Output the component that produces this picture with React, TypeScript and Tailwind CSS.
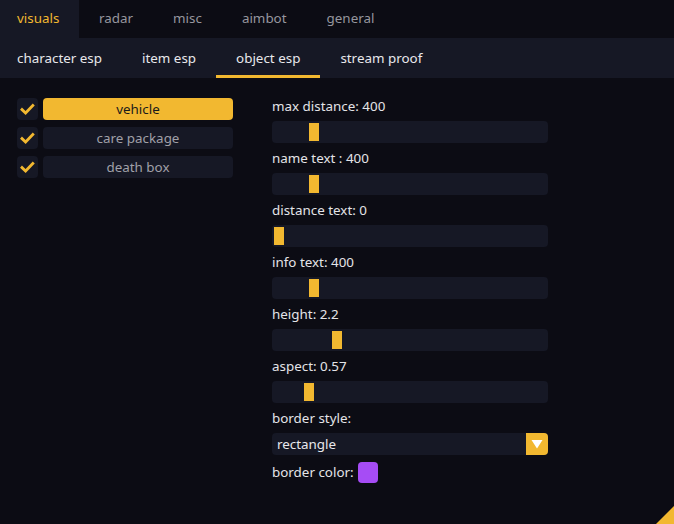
import { useState } from "react";

const mainTabs = ["visuals", "radar", "misc", "aimbot", "general"];
const subTabs = ["character esp", "item esp", "object esp", "stream proof"];

const objects = [
  { name: "vehicle", on: true, selected: true },
  { name: "care package", on: true, selected: false },
  { name: "death box", on: true, selected: false },
];

// offset = left edge of the grab inside the track, in px
const sliders = [
  { label: "max distance: 400", offset: 37 },
  { label: "name text : 400", offset: 37 },
  { label: "distance text: 0", offset: 2 },
  { label: "info text: 400", offset: 37 },
  { label: "height: 2.2", offset: 60 },
  { label: "aspect: 0.57", offset: 32 },
];

function Check() {
  return (
    <svg width="15" height="15" viewBox="0 0 15 15">
      <path d="M2 7.6 L5.6 11 L12.8 3.6" fill="none" stroke="#f2b830" strokeWidth="2.8" strokeLinecap="square" />
    </svg>
  );
}

function Slider({ label, offset }: { label: string; offset: number }) {
  return (
    <div className="flex flex-col">
      <div className="h-[23px] leading-[16px] text-[#e4e4e8]">{label}</div>
      <div className="relative h-[22px] w-[276px] rounded-[4px] bg-[#161825]">
        <div className="absolute top-[2px] h-[18px] w-[10px] bg-[#f2b830]" style={{ left: offset }} />
      </div>
      <div className="h-[7px]" />
    </div>
  );
}

export default function App() {
  const [tab] = useState("visuals");
  const [sub] = useState("object esp");

  return (
    <div
      className="relative w-[674px] h-[524px] overflow-hidden bg-[#0c0c14] text-[13.4px]"
      style={{ fontFamily: '"Noto Sans", "Open Sans", sans-serif' }}
    >
      {/* top tabs */}
      <div className="flex h-[38px] bg-[#0c0c14]">
        {mainTabs.map((t) => (
          <div
            key={t}
            className={`flex items-center h-full pb-[2px] ${
              t === tab ? "bg-[#161825] text-[#f2b830] pl-[17px] w-[79px]" : "text-[#96969e] px-[20px]"
            }`}
          >
            {t}
          </div>
        ))}
      </div>

      {/* sub tabs */}
      <div className="flex h-[40px] bg-[#161825]">
        {subTabs.map((s) => (
          <div key={s} className="relative flex items-center h-full px-[20px] first:pl-[17px] text-[#e8e8ec]">
            {s}
            {s === sub && <div className="absolute left-0 right-0 bottom-0 h-[3px] bg-[#f2b830]" />}
          </div>
        ))}
      </div>

      <div className="flex pt-[20px]">
        {/* object list */}
        <div className="flex flex-col gap-[7px] pl-[17px] w-[272px]">
          {objects.map((o) => (
            <div key={o.name} className="flex gap-[5px] h-[22px]">
              <div className="flex items-center justify-center w-[21px] h-[22px] rounded-[4px] bg-[#161825]">
                {o.on && <Check />}
              </div>
              <div
                className={`flex items-center justify-center w-[190px] h-[22px] rounded-[4px] ${
                  o.selected ? "bg-[#f2b830] text-[#1a1a1a]" : "bg-[#161825] text-[#a0a0a8]"
                }`}
              >
                {o.name}
              </div>
            </div>
          ))}
        </div>

        {/* settings */}
        <div className="flex flex-col">
          {sliders.map((s) => (
            <Slider key={s.label} label={s.label} offset={s.offset} />
          ))}
          <div className="h-[23px] leading-[16px] text-[#e4e4e8]">border style:</div>
          <div className="flex h-[22px] w-[276px] rounded-[4px] bg-[#161825]">
            <div className="flex-1 flex items-center pl-[5px] text-[#e8e8ec]">rectangle</div>
            <div className="flex items-center justify-center w-[22px] h-[22px] rounded-r-[4px] bg-[#f2b830]">
              <svg width="12" height="10" viewBox="0 0 12 10">
                <path d="M0.5 1 H11.5 L6 9.5 Z" fill="#ffffff" />
              </svg>
            </div>
          </div>
          <div className="flex items-center gap-[4px] mt-[6px] h-[22px] text-[#e4e4e8]">
            <span>border color:</span>
            <div className="w-[20px] h-[21px] rounded-[4px] bg-[#a64cf5]" />
          </div>
        </div>
      </div>

      {/* resize grip */}
      <svg className="absolute right-0 bottom-0" width="18" height="18" viewBox="0 0 18 18">
        <path d="M18 0 V18 H0 Z" fill="#f2b830" />
      </svg>
    </div>
  );
}
